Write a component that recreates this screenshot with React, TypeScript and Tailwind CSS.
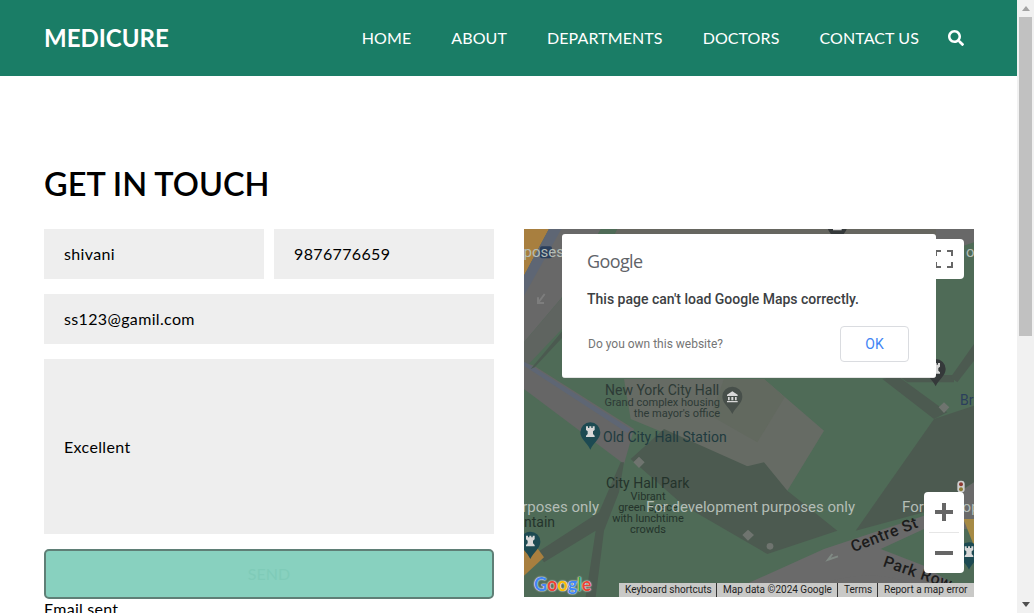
import React from 'react';
import { FaSearch } from 'react-icons/fa';

const navLinks = ['HOME', 'ABOUT', 'DEPARTMENTS', 'DOCTORS', 'CONTACT US'];

const Pin: React.FC<{ x: number; y: number; color: string; bank?: boolean }> = ({ x, y, color, bank }) => (
  <g transform={`translate(${x} ${y})`}>
    <path d="M-30 0a30 30 0 0 1 60 0c0 20-20 30-30 52c-10-22-30-32-30-52z" fill={color} />
    {bank ? (
      <path d="M-16 -2h32v-4l-16-10l-16 10zM-13 1h5v10h-5zM-3 1h6v10h-6zM8 1h5v10h-5zM-16 13h32v4h-32z" fill="#d8d8d8" />
    ) : (
      <path d="M-13 -18h6v5h4v-5h6v5h4v-5h6v11l-5 4v8l5 5v4h-26v-4l5-5v-8l-5-4z" fill="#d8d8d8" />
    )}
  </g>
);

// rough copy of the dimmed map tiles, coords are 3x the map box
const MapTiles = () => (
  <svg viewBox="0 0 1350 1104" className="absolute inset-0 w-full h-full">
    <rect width="1350" height="1104" fill="#4f6b57" />
    <path d="M0 0H75L0 140z" fill="#a87f3f" />
    <path d="M75 0H230L110 210L0 340V140z" fill="#686868" />
    <path d="M75 0H112L0 200V140z" fill="#5e6674" />
    <path d="M280 0H700L640 20H270zM670 0H1236V20H650z" fill="#666660" />
    <path d="M1236 0H1350V40L1290 60H1236z" fill="#686868" />
    <path d="M0 340L110 210L180 230L0 420z" fill="#5f6460" />
    <path d="M0 400L30 410L330 600L300 705L0 480z" fill="#666666" />
    <path d="M0 398L30 415L320 600L310 612L0 410z" fill="#5e6674" />
    <path d="M120 300L20 420L32 415L130 310z" fill="#4b5a50" />
    <path d="M300 450H720L900 605L790 785L710 715L660 710L320 570z" fill="#666b64" />
    <path d="M720 450L782 505L700 640L560 560L600 450z" fill="#62695f" />
    <path d="M320 690L420 600L670 712L720 700L790 785L940 905L730 975L480 830z" fill="#4c5a50" />
    <path d="M1075 450L1120 440L1270 550L1230 570z" fill="#4c5a50" />
    <path d="M1120 438H1290V460H1150z" fill="#4c5a50" />
    <path d="M1350 345V395L1300 460L1280 445z" fill="#4c5a50" />
    <path d="M995 905L1230 570L1350 530V760L1200 850z" fill="#4c5a50" />
    <path d="M290 700H300L285 790L240 905L215 1104H185L215 905L60 1000L40 970L225 850z" fill="#4c5a50" />
    <path d="M0 1040L60 985L20 930L0 940z" fill="#a87f3f" />
    <path d="M580 1104L900 960L1200 860L1350 760V900L1200 900L1070 960L1200 1010L1350 1104z" fill="#6a6a6a" />
    <path d="M860 1075Q1000 1020 1120 1050L1260 1104H820z" fill="#6a6a6a" />
    <path d="M900 1080Q1020 1050 1100 1075L1170 1104H850z" fill="#a68a45" />
    <path d="M1318 870H1350V950z" fill="#a68a45" />
    <path d="M925 975L912 992L942 982" fill="none" stroke="#808a84" strokeWidth="6" />
    <path d="M62 195L42 222M42 205V222H60" fill="none" stroke="#7d7d7d" strokeWidth="6" />
    <rect x="48" y="52" width="36" height="36" rx="6" fill="#2b3f5c" />
    <path d="M345 683L362 700L345 717L328 700zM672 902L690 918L672 935L655 918zM1260 520L1276 535L1260 552L1244 535z" fill="#6f746f" />
    <circle cx="738" cy="952" r="10" fill="#6f746f" />
    <rect x="1300" y="755" width="22" height="36" rx="10" fill="#cfcfcf" />
    <circle cx="1311" cy="766" r="6" fill="#8d3b33" />
    <circle cx="1311" cy="781" r="6" fill="#8d7b33" />
    <Pin x={625} y={503} color="#474f4a" bank />
    <Pin x={199} y={610} color="#1d4a52" />
    <Pin x={19} y={938} color="#1d4a52" />
    <Pin x={1335} y={970} color="#1d4a52" />
    <Pin x={1235} y={420} color="#35393a" />
    <Pin x={940} y={-10} color="#35393a" />
  </svg>
);

const MapLabel: React.FC<{ className: string; children: React.ReactNode }> = ({ className, children }) => (
  <div className={`absolute whitespace-nowrap font-['Roboto',sans-serif] ${className}`}>{children}</div>
);

const GoogleMap = () => (
  <div className="relative h-[368px] overflow-hidden bg-[#4f6b57]">
    <MapTiles />

    {/* place names */}
    <MapLabel className="left-[81px] top-[153px] text-[14px] leading-4 text-[#2d3a36]">New York City Hall</MapLabel>
    <MapLabel className="right-[254px] top-[168px] text-right text-[11px] leading-[11px] text-[#2d3a36]">
      Grand complex housing
      <br />
      the mayor's office
    </MapLabel>
    <MapLabel className="left-[79px] top-[200px] text-[14px] leading-4 text-[#1f3b3f]">Old City Hall Station</MapLabel>
    <MapLabel className="left-[82px] top-[246px] text-[14px] leading-4 text-[#24332b]">City Hall Park</MapLabel>
    <MapLabel className="left-[84px] w-[80px] top-[262px] text-center text-[11px] leading-[11px] text-[#24332b]">
      Vibrant
      <br />
      green space
      <br />
      with lunchtime
      <br />
      crowds
    </MapLabel>
    <MapLabel className="left-0 top-[285px] text-[14px] leading-4 text-[#24332b]">ntain</MapLabel>
    <MapLabel className="left-[436px] top-[163px] text-[14px] leading-4 text-[#2b3f5c]">Bri</MapLabel>
    <MapLabel className="left-[325px] top-[298px] -rotate-[21deg] text-[16px] font-medium tracking-[0.5px] leading-4 text-[#1c1c1c]">Centre St</MapLabel>
    <MapLabel className="left-[358px] top-[336px] rotate-[19deg] text-[16px] font-medium tracking-[0.5px] leading-4 text-[#1c1c1c]">Park Row</MapLabel>

    {/* dev watermark */}
    <MapLabel className="left-[122px] top-[268px] text-[15px] leading-5 text-[#b4bdb6]">For development purposes only</MapLabel>
    <MapLabel className="right-[375px] top-[268px] text-[15px] leading-5 text-[#b4bdb6]">purposes only</MapLabel>
    <MapLabel className="left-[378px] top-[268px] text-[15px] leading-5 text-[#b4bdb6]">For development</MapLabel>
    <MapLabel className="right-[410px] top-[13px] text-[15px] leading-5 text-[#b4bdb6]">purposes</MapLabel>
    <MapLabel className="left-[442px] top-[13px] text-[15px] leading-5 text-[#b4bdb6]">op</MapLabel>

    {/* fullscreen */}
    <div className="absolute left-[400px] top-[10px] w-10 h-10 rounded-sm bg-white flex items-center justify-center">
      <svg width="18" height="18" viewBox="0 0 18 18" className="text-[#666]">
        <path d="M1 6V1h5M12 1h5v5M17 12v5h-5M6 17H1v-5" fill="none" stroke="currentColor" strokeWidth="2" />
      </svg>
    </div>

    {/* zoom */}
    <div className="absolute left-[400px] top-[263px] w-10 flex flex-col items-center rounded-sm bg-white">
      <div className="h-10 flex items-center justify-center text-[#666]">
        <svg width="18" height="18" viewBox="0 0 18 18" fill="currentColor">
          <path d="M0 7h7V0h4v7h7v4h-7v7H7v-7H0z" />
        </svg>
      </div>
      <div className="w-[30px] h-px bg-[#e6e6e6]" />
      <div className="h-10 flex items-center justify-center text-[#666]">
        <svg width="18" height="18" viewBox="0 0 18 18" fill="currentColor">
          <path d="M0 7h18v4H0z" />
        </svg>
      </div>
    </div>

    {/* google logo */}
    <div className="absolute left-[10px] top-[343px] flex font-['Lato',sans-serif] font-bold text-[18px] leading-6 [text-shadow:0_0_2px_#fff,0_0_1px_#fff]">
      <span className="text-[#4285f4]">G</span>
      <span className="text-[#ea4335]">o</span>
      <span className="text-[#fbbc05]">o</span>
      <span className="text-[#4285f4]">g</span>
      <span className="text-[#34a853]">l</span>
      <span className="text-[#ea4335]">e</span>
    </div>

    {/* attribution */}
    <div className="absolute left-[95px] right-0 bottom-0 h-[14px] flex bg-[#c9c9c7] font-['Roboto',sans-serif] text-[10px] leading-[14px] text-[#222]">
      <div className="w-[98px] pl-[6px] border-r border-[#333]">Keyboard shortcuts</div>
      <div className="w-[121px] pl-[6px] border-r border-[#333]">Map data ©2024 Google</div>
      <div className="w-[40px] pl-[6px] border-r border-[#333]">Terms</div>
      <div className="flex-1 pl-[6px]">Report a map error</div>
    </div>

    {/* error dialog */}
    <div className="absolute left-[38px] top-[5px] w-[374px] h-[144px] rounded-[3px] bg-white pl-[25px] pr-[27px] pt-[15px] border-b border-[#e4e4e4] font-['Roboto',sans-serif]">
      <div className="font-['Open_Sans',sans-serif] text-[18px] leading-6 tracking-[-0.6px] text-[#5f6368]">Google</div>
      <div className="mt-[16px] text-[14px] font-medium leading-5 text-[#3c4043]">This page can't load Google Maps correctly.</div>
      <div className="mt-[17px] flex items-center justify-between">
        <span className="pl-px text-[12px] text-[#757575]">Do you own this website?</span>
        <button className="w-[69px] h-[36px] rounded-[4px] border border-[#dadce0] text-[14px] text-[#4285f4]">OK</button>
      </div>
    </div>
  </div>
);

const Field: React.FC<{ className?: string; children: React.ReactNode }> = ({ className = 'h-[50px]', children }) => (
  <div className={`flex items-center bg-[#eeeeee] px-5 text-[16px] tracking-[0.35px] text-black ${className}`}>{children}</div>
);

const Scrollbar = () => (
  <div className="w-[17px] shrink-0 h-full flex flex-col items-center bg-[#f1f1f1]">
    <div className="h-[17px] flex items-center justify-center">
      <div className="border-x-[4px] border-b-[5px] border-x-transparent border-b-[#a3a3a3]" />
    </div>
    <div className="w-[13px] h-[319px] bg-[#c1c1c1]" />
    <div className="mt-auto h-[17px] flex items-center justify-center">
      <div className="border-x-[4px] border-t-[5px] border-x-transparent border-t-[#505050]" />
    </div>
  </div>
);

export default function App() {
  return (
    <div className="flex h-[613px] w-[1034px] overflow-hidden bg-white font-['Lato',sans-serif] text-black">
      <div className="flex-1 min-w-0">
        <header className="h-[76px] bg-[#1a7d66] px-11 flex items-center justify-between text-white">
          <a className="text-[24px] font-bold">MEDICURE</a>
          <nav className="flex items-center pr-[9px]">
            <ul className="flex items-center gap-10 pb-px text-[16px] tracking-[0.1px]">
              {navLinks.map((link) => (
                <li key={link}>{link}</li>
              ))}
            </ul>
            <FaSearch className="ml-[29px] text-[16px]" />
          </nav>
        </header>

        <section className="pl-11 pr-[43px] pt-[85px]">
          <h2 className="text-[32.5px] leading-[46px] font-semibold">GET IN TOUCH</h2>
          <div className="mt-[22px] grid grid-cols-2 gap-[30px]">
            <form className="flex flex-col gap-[15px]">
              <div className="grid grid-cols-2 gap-[10px]">
                <Field>shivani</Field>
                <Field>9876776659</Field>
              </div>
              <Field>ss123@gamil.com</Field>
              <Field className="h-[175px]">Excellent</Field>
              <div>
                <button className="w-full h-[50px] rounded-[5px] border-2 border-[#5f7f76] bg-[#88d1bf] text-[16px] text-[#7fcbb8]">SEND</button>
                <div className="text-[16px] leading-5 tracking-[0.25px]">Email sent</div>
              </div>
            </form>
            <GoogleMap />
          </div>
        </section>
      </div>
      <Scrollbar />
    </div>
  );
}
